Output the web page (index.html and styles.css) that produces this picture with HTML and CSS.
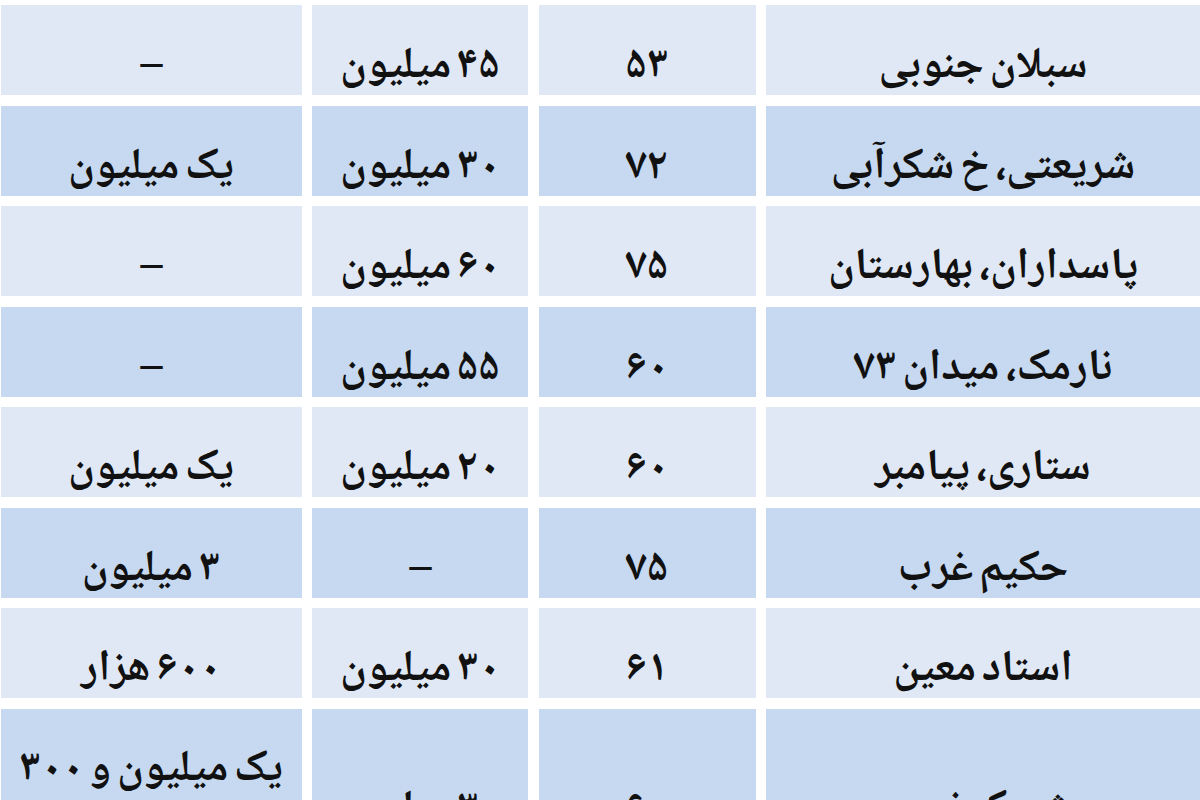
FILE: index.html
```html
<!DOCTYPE html>
<html lang="fa" dir="rtl">
<head>
<meta charset="utf-8">
<title>جدول</title>
<link rel="stylesheet" href="styles.css">
</head>
<body>
<div class="table">
  <div class="cell light">سبلان جنوبی</div>
  <div class="cell light">۵۳</div>
  <div class="cell light">۴۵ میلیون</div>
  <div class="cell light">–</div>

  <div class="cell dark">شریعتی، خ شکرآبی</div>
  <div class="cell dark">۷۲</div>
  <div class="cell dark">۳۰ میلیون</div>
  <div class="cell dark">یک میلیون</div>

  <div class="cell light">پاسداران، بهارستان</div>
  <div class="cell light">۷۵</div>
  <div class="cell light">۶۰ میلیون</div>
  <div class="cell light">–</div>

  <div class="cell dark">نارمک، میدان ۷۳</div>
  <div class="cell dark">۶۰</div>
  <div class="cell dark">۵۵ میلیون</div>
  <div class="cell dark">–</div>

  <div class="cell light">ستاری، پیامبر</div>
  <div class="cell light">۶۰</div>
  <div class="cell light">۲۰ میلیون</div>
  <div class="cell light">یک میلیون</div>

  <div class="cell dark">حکیم غرب</div>
  <div class="cell dark">۷۵</div>
  <div class="cell dark">–</div>
  <div class="cell dark">۳ میلیون</div>

  <div class="cell light">استاد معین</div>
  <div class="cell light">۶۱</div>
  <div class="cell light">۳۰ میلیون</div>
  <div class="cell light">۶۰۰ هزار</div>

  <div class="cell dark tall">شهرک غرب</div>
  <div class="cell dark tall">۶۰</div>
  <div class="cell dark tall">۳۰ میلیون</div>
  <div class="cell dark tall multi">یک میلیون و ۳۰۰<br>هزار</div>
</div>
</body>
</html>
```

FILE: styles.css
```css
html, body {
  margin: 0;
  padding: 0;
  background: #ffffff;
}

body {
  width: 1200px;
  height: 800px;
  overflow: hidden;
}

.table {
  direction: rtl;
  display: grid;
  grid-template-columns: 434px 217px 216px 301px;
  grid-auto-rows: 90px;
  column-gap: 10.5px;
  row-gap: 10.5px;
  padding-top: 5px;
}

.cell {
  display: flex;
  align-items: flex-end;
  justify-content: center;
  padding-bottom: 0;
  box-sizing: border-box;
  font-family: "Noto Naskh Arabic", "Noto Sans Arabic", "DejaVu Sans", sans-serif;
  font-weight: bold;
  font-size: 44px;
  line-height: 1.25;
  letter-spacing: -1px;
  word-spacing: -4px;
  color: #111111;
  text-align: center;
  white-space: nowrap;
}

.light {
  background: #e0e8f5;
}

.dark {
  background: #c6d9f0;
}

.tall {
  height: 204px;
  align-items: center;
  padding-bottom: 0;
}

.multi {
  line-height: 80px;
}
```
